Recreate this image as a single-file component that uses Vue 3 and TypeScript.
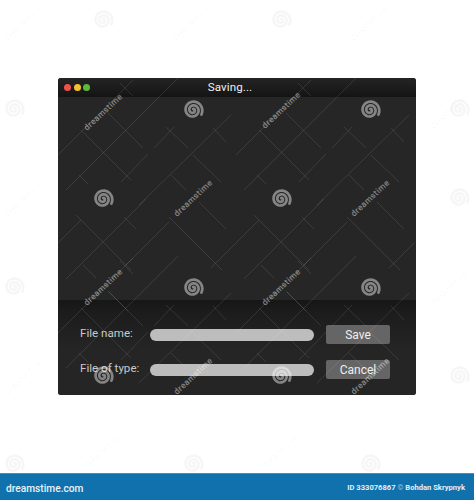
<script setup lang="ts">
interface Mark { x: number; y: number; faint?: boolean }
const spirals: Mark[] = [
  { x: 193, y: 110 }, { x: 370, y: 110 }, { x: 103, y: 199 }, { x: 281, y: 199 },
  { x: 193, y: 288 }, { x: 370, y: 288 }, { x: 103, y: 376 }, { x: 281, y: 376 },
  { x: 14, y: 109, faint: true }, { x: 459, y: 109, faint: true }, { x: 14, y: 287, faint: true },
  { x: 459, y: 198, faint: true }, { x: 459, y: 376, faint: true }, { x: 14, y: 464, faint: true },
  { x: 103, y: 20, faint: true }, { x: 281, y: 20, faint: true }, { x: 193, y: 464, faint: true }, { x: 370, y: 464, faint: true }
]
const words: Mark[] = [
  { x: 103, y: 112 }, { x: 281, y: 110 }, { x: 193, y: 198 }, { x: 370, y: 198 },
  { x: 103, y: 287 }, { x: 281, y: 287 }, { x: 193, y: 376 }, { x: 370, y: 376 },
  { x: 24, y: 22, faint: true }, { x: 192, y: 22, faint: true }, { x: 370, y: 22, faint: true },
  { x: 450, y: 110, faint: true }, { x: 24, y: 198, faint: true }, { x: 450, y: 287, faint: true },
  { x: 24, y: 376, faint: true }, { x: 103, y: 450, faint: true }, { x: 281, y: 450, faint: true }
]
// One band of the watermark's line pattern; it repeats every 178px across and down.
const upper: number[][] = [
  [58, 155, 133, 80], [66, 190, 178, 78], [121, 182, 148, 154], [154, 148, 174, 127],
  [139, 205, 231, 115], [81, 130, 131, 180], [108, 113, 143, 148], [166, 127, 188, 148],
  [193, 155, 221, 182], [213, 128, 226, 142], [171, 175, 186, 190], [79, 175, 88, 184],
  [120, 83, 133, 96]
]
const lower: number[][] = [
  [58, 243, 81, 220], [66, 279, 146, 199], [76, 215, 131, 270], [126, 265, 169, 222],
  [169, 217, 222, 270], [211, 268, 236, 243], [124, 217, 136, 229], [199, 202, 226, 229],
  [109, 292, 128, 311], [83, 265, 96, 278]
]
const shift = (set: number[][], dx: number, dy: number): number[][] =>
  set.map(([a, b, c, d]) => [a + dx, b + dy, c + dx, d + dy])
const lines: number[][] = [upper, lower, shift(upper, 0, 178)].flatMap((set) => [
  ...set,
  ...shift(set, 178, 0)
])

// Archimedean spiral: starts near the middle, ends in a tail at the lower right.
const spiralPath = ((): string => {
  const steps = 60
  const turns = 2.3
  const endAngle = 0.5
  const points: string[] = []
  for (let i = 0; i <= steps; i++) {
    const t = i / steps
    const angle = endAngle - (1 - t) * turns * Math.PI * 2
    const radius = 1 + 8.6 * t
    points.push(`${(radius * Math.cos(angle)).toFixed(2)} ${(radius * Math.sin(angle)).toFixed(2)}`)
  }
  return 'M' + points.join('L')
})()
</script>

<template>
  <div class="page">
    <div class="stage">
      <section class="window">
        <header class="titlebar">
          <div class="dots">
            <span class="dot red"></span>
            <span class="dot yellow"></span>
            <span class="dot green"></span>
          </div>
          <span class="title">Saving...</span>
        </header>
        <div class="body"></div>
        <div class="form">
          <div class="row">
            <span class="label">File name:</span>
            <div class="field"></div>
            <button class="btn" type="button">Save</button>
          </div>
          <div class="row">
            <span class="label">File of type:</span>
            <div class="field"></div>
            <button class="btn" type="button">Cancel</button>
          </div>
        </div>
      </section>
    </div>

    <footer class="footer">
      <span class="brand">dreamstime.com</span>
      <span class="credit">ID 333076867 <span class="copy">©</span> Bohdan Skrypnyk</span>
    </footer>

    <svg class="overlay" width="474" height="500" viewBox="0 0 474 500">
      <defs>
        <clipPath id="window-clip">
          <rect x="58" y="78" width="358" height="317" />
        </clipPath>
      </defs>
      <g clip-path="url(#window-clip)" stroke="#fff" stroke-opacity="0.1" stroke-width="1" fill="none">
        <line v-for="(l, i) in lines" :key="i" :x1="l[0]" :y1="l[1]" :x2="l[2]" :y2="l[3]" />
      </g>
      <path
        v-for="(s, i) in spirals"
        :key="'s' + i"
        :d="spiralPath"
        :transform="`translate(${s.x} ${s.y})`"
        fill="none"
        :stroke="s.faint ? '#000' : '#fff'"
        :stroke-opacity="s.faint ? 0.035 : 0.44"
        stroke-width="2.7"
        stroke-linecap="round"
        stroke-linejoin="round"
      />
    </svg>

    <span
      v-for="(w, i) in words"
      :key="'w' + i"
      class="mark"
      :class="{ faint: w.faint }"
      :style="{ left: w.x + 'px', top: w.y + 'px' }"
    >dreamstime</span>
  </div>
</template>

<style>
html, body { margin: 0; background: #fff; }
</style>

<style scoped>
.page {
  position: relative;
  width: 474px;
  height: 500px;
  overflow: hidden;
  display: flex;
  flex-direction: column;
  background: #fff;
  font-family: Roboto, "Liberation Sans", sans-serif;
}
.stage {
  flex: 1;
  padding: 78px 0 0 58px;
}
.window {
  width: 358px;
  height: 317px;
  display: flex;
  flex-direction: column;
  background: #262626;
  border-radius: 3px;
  overflow: hidden;
}
.titlebar {
  position: relative;
  height: 19px;
  flex: none;
  display: flex;
  align-items: center;
  justify-content: center;
  background: linear-gradient(#242424, #141414);
}
.dots {
  position: absolute;
  left: 6px;
  top: 6px;
  display: flex;
  gap: 2.5px;
}
.dot {
  width: 7px;
  height: 7px;
  border-radius: 50%;
}
.red { background: #f0504c; }
.yellow { background: #f4c02f; }
.green { background: #5fb83c; }
.title {
  color: #f0f0f0;
  font-size: 11.6px;
  line-height: 19px;
  letter-spacing: 0.1px;
  margin-right: 14px;
}
.body {
  flex: 1;
}
.form {
  height: 95px;
  flex: none;
  box-sizing: border-box;
  padding: 25px 26px 0 22px;
  display: flex;
  flex-direction: column;
  gap: 16px;
  background: linear-gradient(#161616 0, #1c1c1c 12px, #252525 50px);
}
.row {
  height: 19px;
  display: flex;
  align-items: center;
}
.label {
  width: 70px;
  flex: none;
  color: #c9c9c9;
  font-size: 11.6px;
  white-space: nowrap;
  margin-top: -3px;
}
.field {
  width: 164px;
  height: 12px;
  flex: none;
  background: #bdbdbd;
  border-radius: 6px;
}
.btn {
  width: 64px;
  height: 19px;
  margin-left: 12px;
  flex: none;
  padding: 0;
  border: none;
  border-radius: 2px;
  background: #656565;
  color: #efefef;
  font: 12px Roboto, "Liberation Sans", sans-serif;
}
.footer {
  height: 27px;
  flex: none;
  box-sizing: border-box;
  padding: 0 9px 0 6px;
  display: flex;
  align-items: center;
  justify-content: space-between;
  background: #1071ac;
  border-top: 1px solid #3f8fbf;
  color: #fff;
}
.brand {
  font-size: 10.2px;
  font-weight: 500;
  color: #e9f3f9;
  padding-top: 3px;
}
.credit {
  font-size: 7.6px;
  font-weight: 700;
  color: #e3eff6;
}
.copy {
  color: #8fc0dc;
}
.overlay {
  position: absolute;
  left: 0;
  top: 0;
  pointer-events: none;
}
.mark {
  position: absolute;
  transform: translate(-50%, -50%) rotate(-43deg);
  font-size: 8.5px;
  font-weight: 500;
  letter-spacing: 0.4px;
  color: rgba(255, 255, 255, 0.45);
  white-space: nowrap;
  pointer-events: none;
}
.mark.faint {
  color: rgba(0, 0, 0, 0.035);
}
</style>
